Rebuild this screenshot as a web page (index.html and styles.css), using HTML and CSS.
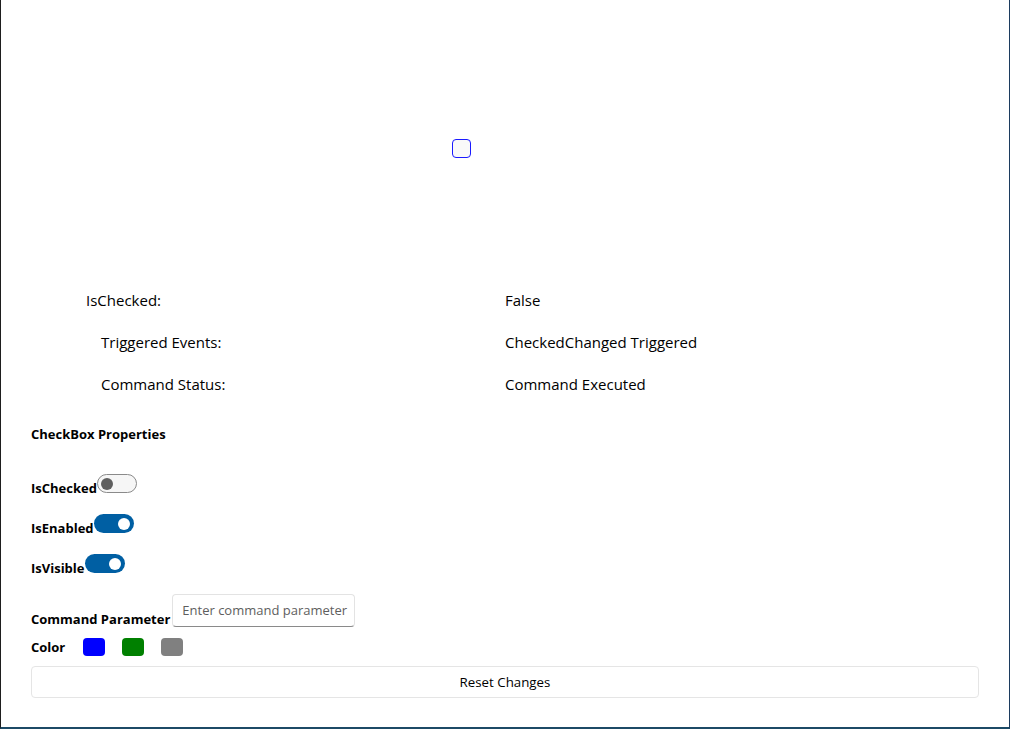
FILE: index.html
```html
<!DOCTYPE html>
<html>
<head>
<meta charset="utf-8">
<link rel="stylesheet" href="styles.css">
</head>
<body>
<div class="frame">
  <div class="stage">
    <div class="checkbox"></div>
  </div>
  <div class="status">
    <div class="lbl l1">IsChecked:</div><div class="val">False</div>
    <div class="lbl l2">Triggered Events:</div><div class="val">CheckedChanged Triggered</div>
    <div class="lbl l2">Command Status:</div><div class="val">Command Executed</div>
  </div>
  <div class="props">
    <div class="title">CheckBox Properties</div>
    <div class="prow r1"><span class="plabel">IsChecked</span><span class="toggle off"><span class="knob"></span></span></div>
    <div class="prow r2"><span class="plabel">IsEnabled</span><span class="toggle on"><span class="knob"></span></span></div>
    <div class="prow r2"><span class="plabel">IsVisible</span><span class="toggle on"><span class="knob"></span></span></div>
    <div class="prow r3"><span class="plabel">Command Parameter</span><span class="entry">Enter command parameter</span></div>
    <div class="crow"><span class="plabel">Color</span><span class="sw blue"></span><span class="sw green"></span><span class="sw gray"></span></div>
    <div class="reset">Reset Changes</div>
  </div>
</div>
</body>
</html>
```
FILE: styles.css
```css
html, body { margin: 0; padding: 0; background: #fff; }
body { font-family: "Open Sans", "Noto Sans", sans-serif; color: #000; }
.frame {
  width: 1010px; height: 729px; box-sizing: border-box;
  border-right: 1px solid #1c3b5e; border-bottom: 2px solid #1c4a66;
  border-left: 1px solid #1e1e1e;
  position: relative; overflow: hidden;
}
.frame::before {
  content: ""; position: absolute; left: -1px; top: 395px; bottom: 0; width: 1px; background: #0e5a78;
}
.stage { height: 290px; position: relative; }
.checkbox {
  position: absolute; left: 451px; top: 139px;
  width: 19px; height: 19px; box-sizing: border-box;
  border: 1.5px solid #1a1aff; border-radius: 4px; background: #f9f9f9;
}
.status { display: grid; grid-template-columns: 504px 1fr; grid-auto-rows: 42px; font-size: 15px; }
.status > div { line-height: 20px; }
.l1 { padding-left: 85px; }
.l2 { padding-left: 100px; }
.props { padding: 0 30px; }
.title { font-weight: 700; font-size: 13px; margin-top: 8px; line-height: 20px; }
.plabel { font-weight: 700; font-size: 13px; line-height: 16px; }
.prow { display: flex; align-items: flex-end; }
.prow .plabel { margin-bottom: -3px; }
.r1 { margin-top: 30px; height: 19px; }
.r2 { margin-top: 21px; height: 19px; }
.r3 { margin-top: 21px; height: 33px; }
.r3 .plabel { margin-bottom: 0; }
.toggle {
  width: 40px; height: 19px; box-sizing: border-box; border-radius: 10px;
  position: relative; align-self: flex-start; display: inline-block;
}
.toggle.off { border: 1px solid #8a8a8a; background: #f6f6f6; }
.toggle.on { background: #005fa3; }
.knob { position: absolute; width: 12px; height: 12px; border-radius: 50%; top: 3.5px; }
.toggle.off .knob { background: #5f5f5f; left: 3px; top: 2.5px; }
.toggle.on .knob { background: #fff; right: 4px; }
.entry {
  align-self: flex-start; margin-left: 2px;
  width: 183px; height: 33px; box-sizing: border-box;
  border: 1px solid #e3e3e3; border-bottom-color: #8a8a8a; border-radius: 4px;
  font-size: 13px; color: #5e5e5e; line-height: 31px; padding-left: 9px; white-space: nowrap;
}
.crow { display: flex; align-items: center; height: 18px; margin-top: 11px; }
.crow .plabel { width: 52px; }
.sw { width: 22px; height: 18px; border-radius: 4px; margin-right: 17px; }
.blue { background: #0000ff; }
.green { background: #008000; }
.gray { background: #808080; }
.reset {
  margin-top: 10px; width: 948px; height: 32px; box-sizing: border-box;
  border: 1px solid #e5e5e5; border-radius: 4px; text-align: center;
  font-size: 13.3px; line-height: 30px;
}
```
